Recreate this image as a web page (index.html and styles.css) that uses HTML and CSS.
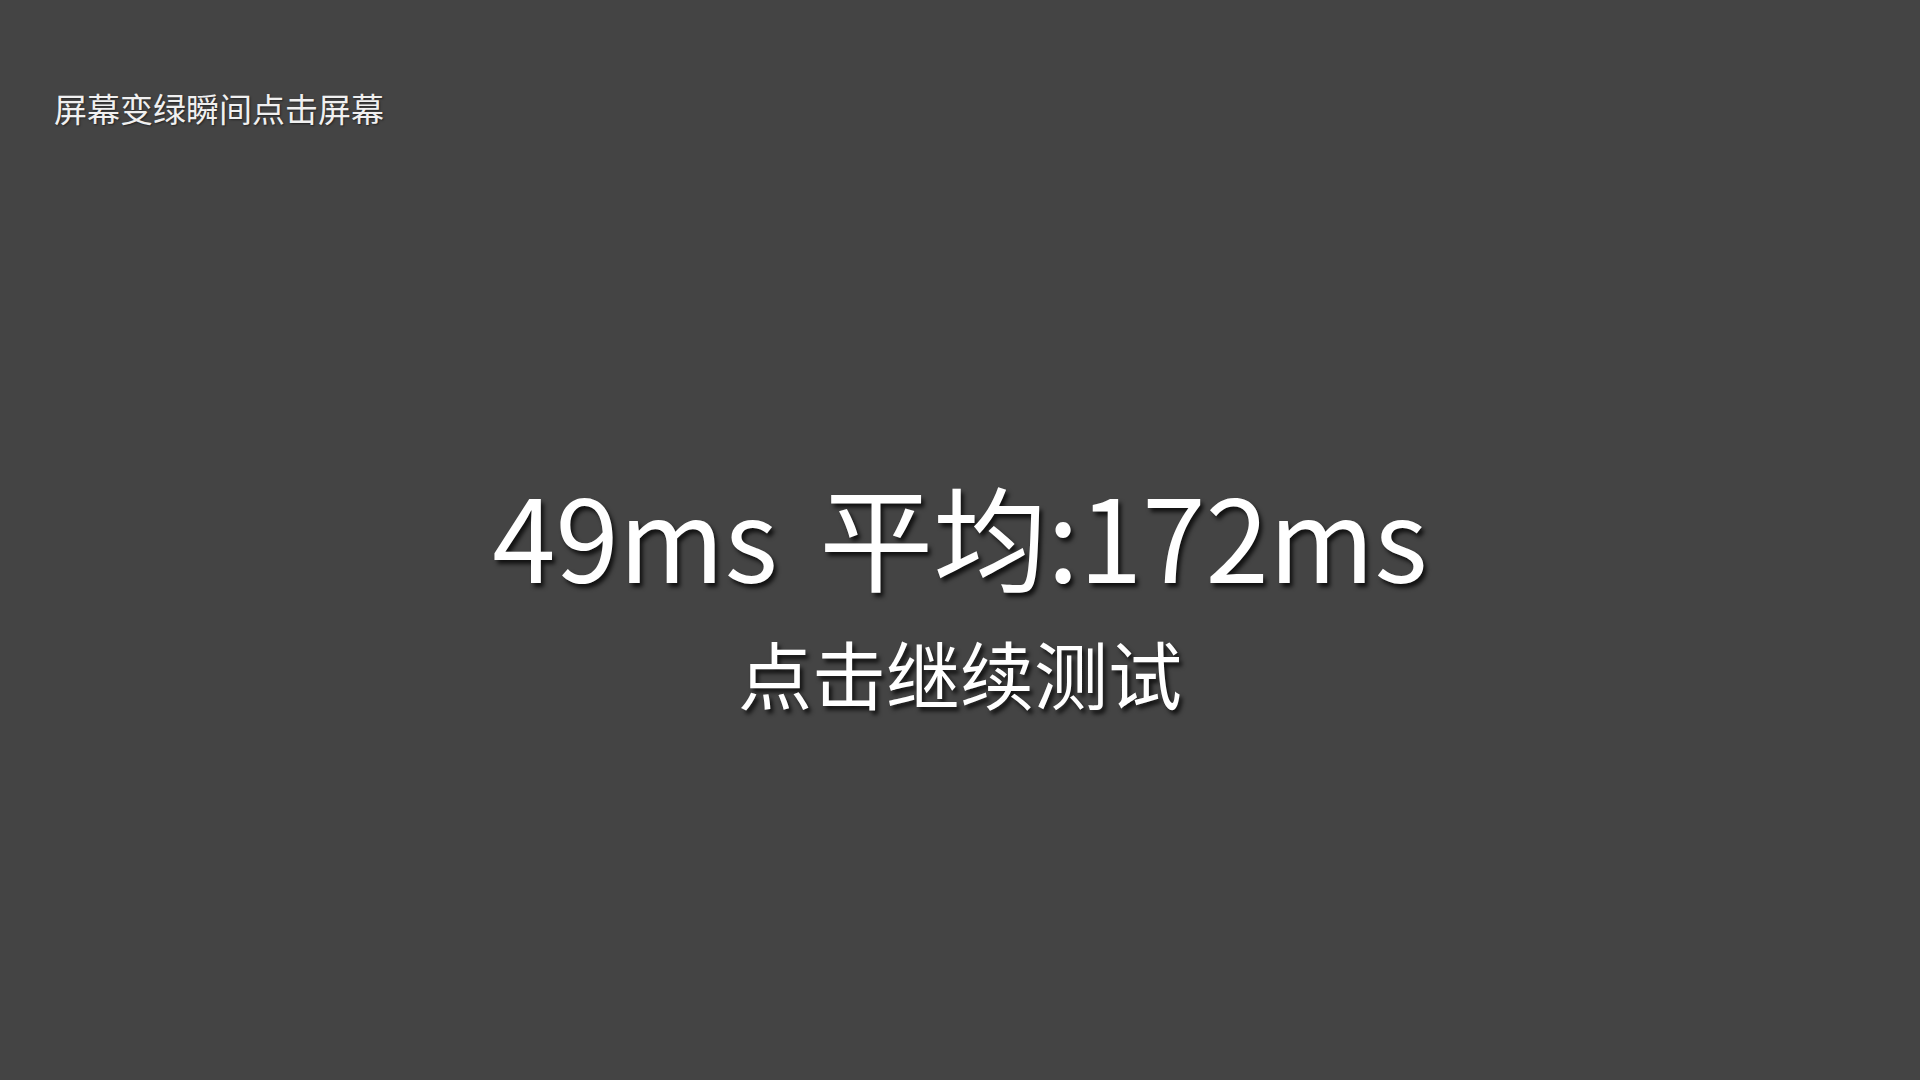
FILE: index.html
```html
<!DOCTYPE html>
<html lang="zh-CN">
<head>
<meta charset="utf-8">
<title>反应测试</title>
<link rel="stylesheet" href="styles.css">
</head>
<body>
<div class="screen">
  <div class="hint">屏幕变绿瞬间点击屏幕</div>
  <div class="result">
    <div class="score">49ms 平均:172ms</div>
    <div class="action">点击继续测试</div>
  </div>
</div>
</body>
</html>
```
FILE: styles.css
```css
html, body {
  margin: 0;
  padding: 0;
  height: 100%;
  background: #444444;
}
.screen {
  height: 1080px;
  display: flex;
  flex-direction: column;
  font-family: "Noto Sans CJK SC", "Noto Sans", sans-serif;
  color: #ffffff;
}
.hint {
  padding: 84px 0 0 54px;
  font-size: 33px;
  line-height: 48px;
  color: #f0f0f0;
  text-shadow: 1px 1px 2px rgba(0,0,0,0.5);
}
.result {
  margin-top: 337px;
  display: flex;
  flex-direction: column;
  align-items: center;
}
.score {
  font-size: 114px;
  line-height: 130px;
  font-weight: 400;
  word-spacing: 16px;
  text-shadow: 3px 4px 4px rgba(0,0,0,0.75);
}
.action {
  margin-top: 23px;
  font-size: 74px;
  line-height: 100px;
  text-shadow: 3px 4px 4px rgba(0,0,0,0.75);
}
```
